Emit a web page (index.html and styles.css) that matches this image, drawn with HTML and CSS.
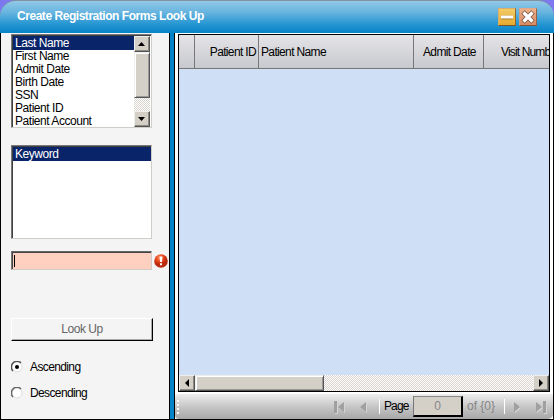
FILE: index.html
```html
<!DOCTYPE html>
<html lang="en">
<head>
<meta charset="utf-8">
<title>Create Registration Forms Look Up</title>
<link rel="stylesheet" href="styles.css">
</head>
<body>
<div class="window">
  <header class="titlebar">
    <h1 class="title">Create Registration Forms Look Up</h1>
    <button class="winbtn minimize" aria-label="Minimize"><svg width="18" height="18" viewBox="0 0 18 18"><path d="M3 9.500h12" stroke="#a87820" stroke-width="4"/><path d="M3 9h12" stroke="#fff" stroke-width="3"/></svg></button>
    <button class="winbtn close" aria-label="Close"><svg width="18" height="18" viewBox="0 0 18 18"><path d="M4 4l10 10m0-10l-10 10" stroke="#79553f" stroke-width="5"/><path d="M4.500 4.500l9 9m0-9l-9 9" stroke="#fff" stroke-width="3.400"/></svg></button>
  </header>
  <main class="content">
    <section class="search">
      <div class="listbox fields">
        <ul class="options">
          <li class="selected">Last Name</li><li>First Name</li><li>Admit Date</li><li>Birth Date</li><li>SSN</li><li>Patient ID</li><li>Patient Account</li>
        </ul>
        <div class="vscroll">
          <span class="arrow"><svg width="8" height="4"><path d="M0 4h7L3.500 0z"/></svg></span>
          <span class="vthumb"></span>
          <span class="track"></span>
          <span class="arrow"><svg width="8" height="4"><path d="M0 0h7L3.500 4z"/></svg></span>
        </div>
      </div>
      <div class="listbox modes"><ul class="options"><li class="selected">Keyword</li></ul></div>
      <div class="entry">
        <div class="input"><span class="caret"></span></div>
        <svg class="error" width="14" height="14" viewBox="0 0 14 14"><defs><radialGradient id="red" cx=".4" cy=".25"><stop offset="0" stop-color="#ff8962"/><stop offset=".6" stop-color="#e84418"/><stop offset="1" stop-color="#b92c10"/></radialGradient></defs><circle cx="7" cy="7" r="6.800" fill="url(#red)"/><path d="M5.500 2.500h3l-.5 5.500h-2zM6 9.300h2v2H6z" fill="#fff"/></svg>
      </div>
      <button class="lookup">Look Up</button>
      <div class="radio asc"><svg width="12" height="12" viewBox="0 0 12 12"><circle cx="6" cy="6" r="5" fill="#fff" stroke="#ddd"/><path d="M2 10A5.200 5.200 0 0 1 10 2" fill="none" stroke="#555" stroke-width="1.500"/><circle cx="6" cy="6" r="2" fill="#000"/></svg><span>Ascending</span></div>
      <div class="radio desc"><svg width="12" height="12" viewBox="0 0 12 12"><circle cx="6" cy="6" r="5" fill="#fff" stroke="#ddd"/><path d="M2 10A5.200 5.200 0 0 1 10 2" fill="none" stroke="#666" stroke-width="1.500"/></svg><span>Descending</span></div>
    </section>
    <div class="splitter"></div>
    <section class="results">
      <div class="grid">
        <div class="head">
          <div class="cell rowmark"></div>
          <div class="cell pid">Patient ID</div>
          <div class="cell pname">Patient Name</div>
          <div class="cell admit">Admit Date</div>
          <div class="cell visit">Visit Numb</div>
        </div>
        <div class="rows"></div>
        <div class="hscroll">
          <span class="arrow"><svg width="4" height="8"><path d="M4 0v8L0 4z"/></svg></span>
          <span class="hthumb"></span>
          <span class="track"></span>
          <span class="arrow"><svg width="4" height="8"><path d="M0 0v8l4-4z"/></svg></span>
        </div>
      </div>
      <div class="pager">
        <span class="grip"><i></i><i></i><i></i><i></i></span>
        <svg class="nav first" width="10" height="12" viewBox="0 0 10 12"><path d="M0 0h3v12H0zM10 1v10L4 6z"/></svg>
        <svg class="nav prev" width="6" height="12" viewBox="0 0 6 12"><path d="M6 1v10L0 6z"/></svg>
        <span class="sep"></span>
        <span class="page">Page</span>
        <span class="number">0</span>
        <span class="total">of {0}</span>
        <span class="sep sep2"></span>
        <svg class="nav next" width="6" height="12" viewBox="0 0 6 12"><path d="M0 1v10l6-5z"/></svg>
        <svg class="nav last" width="10" height="12" viewBox="0 0 10 12"><path d="M7 0h3v12H7zM0 1v10l6-5z"/></svg>
      </div>
    </section>
  </main>
</div>
</body>
</html>
```
FILE: styles.css
```css
* { box-sizing: border-box; }
body { margin: 0; width: 554px; height: 420px; overflow: hidden; background: #7c78f0; font: 12px/13px "Liberation Sans", sans-serif; color: #000; }
ul { margin: 0; padding: 0; list-style: none; }
button { font: inherit; padding: 0; }
svg { display: block; flex: none; }
.window { display: flex; flex-direction: column; height: 420px; }
.titlebar { display: flex; align-items: flex-start; height: 33px; flex: none; padding: 7px 17px 0 17px; border-top: 1px solid #8192a0; border-radius: 16px 16px 0 0; background: linear-gradient(#92c9e8, #68b4df 35%, #2998d3 70%, #0583c8); }
.title { flex: 1; margin: 0; font-size: 12px; line-height: 16px; letter-spacing: -.46px; color: #fff; white-space: nowrap; }
.winbtn { width: 18px; height: 18px; margin-left: 3px; border: 1px solid; border-color: #d9ae69 #8d682e #755528 #d9ae69; background: linear-gradient(#f3cb66, #e8a92f); }
.winbtn svg { margin: -1px; }
.close { background: linear-gradient(#efb18a, #d98b62); border-color: #e0a98c #966243 #805037 #d7a083; }
.content { display: flex; height: 387px; border: solid #000; border-width: 0 1px 1px; background: #f4f4f4; }
.search { width: 169px; flex: none; border-right: 1px solid #000; padding: 1px 0 0 10px; background: #f4f4f4; }
.listbox { display: flex; width: 141px; border: 1px solid; border-color: #777 #d0cec8 #d0cec8 #777; background: #fff; box-shadow: inset 1px 1px #404040; padding: 1px 0 0 1px; }
.fields { height: 94px; padding-right: 1px; }
.modes { height: 94px; margin-top: 17px; }
.options { flex: 1; overflow: hidden; }
.options li { height: 13px; padding-left: 2px; letter-spacing: -.46px; white-space: nowrap; }
.options .selected { height: 14px; padding-top: 1px; background: #0a246a; color: #fff; }
.vscroll { display: flex; flex-direction: column; width: 16px; }
.arrow { display: flex; align-items: center; justify-content: center; flex: none; width: 16px; height: 16px; background: #d4d0c8; border: 1px solid; border-color: #eee #555 #555 #eee; box-shadow: inset -1px -1px #8c8981; }
.vthumb { height: 46px; background: #d4d0c8; border: 1px solid; border-color: #eee #555 #555 #eee; box-shadow: inset 1px 1px #fff, inset -1px -1px #999; }
.track { flex: 1; background: repeating-conic-gradient(#fff 0 25%, #d9d5ce 0 50%) 0 0 / 2px 2px; }
.entry { display: flex; align-items: center; margin-top: 12px; gap: 2px; }
.input { width: 141px; height: 19px; padding: 3px; background: #ffd0c0; border: 1px solid; border-color: #666 #cfccc7 #cfccc7 #777; box-shadow: inset 1px 1px #444; }
.caret { display: block; width: 1px; height: 12px; margin-left: -1px; background: #000; }
.lookup { display: block; width: 142px; height: 23px; margin-top: 48px; border: 1px solid; border-color: #fff #000 #000 #fff; background: #f4f4f4; color: #666; box-shadow: inset -1px -1px #aaa; letter-spacing: -.45px; }
.radio { display: flex; align-items: center; gap: 7px; height: 14px; letter-spacing: -.62px; }
.asc { margin-top: 19px; }
.desc { margin-top: 12px; }
.splitter { width: 5px; flex: none; background: #0583c8; border-right: 1px solid #000; }
.results { flex: 1; min-width: 0; background: #fff; padding-top: 1px; }
.grid { display: flex; flex-direction: column; width: 372px; height: 358px; margin-left: 3px; border: 1px solid #000; background: #cfdff5; }
.head { display: flex; height: 34px; flex: none; overflow: hidden; background: linear-gradient(#e4e4e8, #c8c9ce); border-bottom: 1px solid #777; }
.cell { flex: none; height: 33px; line-height: 34px; border-right: 1px solid #777; white-space: nowrap; letter-spacing: -.65px; overflow: hidden; }
.rowmark { width: 16px; }
.pid { width: 64px; text-align: right; padding-right: 2px; }
.pname { width: 155px; padding-left: 2px; }
.admit { width: 70px; padding-left: 9px; }
.visit { width: 66px; padding-left: 17px; border-right: 0; letter-spacing: -.85px; }
.rows { flex: 1; }
.hscroll { display: flex; height: 16px; flex: none; }
.hthumb { width: 129px; background: #d4d0c8; border: 1px solid; border-color: #eee #555 #555 #eee; box-shadow: inset 1px 1px #fff, inset -1px -1px #999; }
.pager { display: flex; align-items: center; height: 25px; margin-top: 2px; border-radius: 4px 0 5px 4px; background: linear-gradient(#eee, #c7c7c7 50%, #a7a7a7); }
.grip { display: flex; flex-direction: column; gap: 2px; width: 3px; margin-left: 2px; }
.grip i { width: 2px; height: 2px; background: #f8f8f8; }
.nav { fill: #a0a0a0; filter: drop-shadow(1px 1px 0 #d4d4d4); }
.first { margin-left: 154px; }
.prev { margin-left: 16px; }
.sep { width: 1px; height: 15px; margin-left: 13px; background: #fff; }
.page { margin-left: 4px; letter-spacing: -.9px; width: 26px; }
.number { width: 50px; height: 21px; margin-left: 3px; border: 1px solid; border-color: #888 #000 #000 #777; border-right-width: 2px; border-bottom-width: 2px; background: #d4d0c8; color: #888; text-align: center; line-height: 19px; }
.total { margin-left: 4px; width: 29px; color: #858585; white-space: nowrap; }
.sep2 { margin-left: 8px; }
.next { margin-left: 9px; }
.last { margin-left: 16px; }
```
